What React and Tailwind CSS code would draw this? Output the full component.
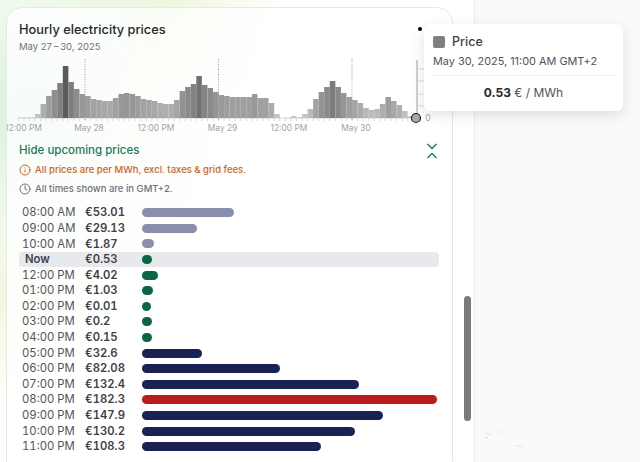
import { ChevronsDownUp, Info, Clock } from "lucide-react";

const BAR_HEIGHTS = [
  0.5, 0.5, 0.7, 4, 14, 22, 28, 35, 52, 36, 29, 24, 22, 19, 18, 17, 17, 20, 24, 25, 24, 22, 19, 18, 17,
  15, 14, 14, 18, 27, 31, 34, 42, 33, 30, 26, 23, 22, 21, 21, 21, 21, 24, 20, 20, 15, 4, 0, 0.3, 2, 1, 4, 9,
  19, 26, 31, 37, 31, 25, 21, 18, 15, 10, 8, 9, 14, 21, 17, 13, 7, 2,
];

const PRICES = [
  { time: "08:00 AM", price: 53.01, color: "bg-[#8b8fae]" },
  { time: "09:00 AM", price: 29.13, color: "bg-[#8b8fae]" },
  { time: "10:00 AM", price: 1.87, color: "bg-[#8b8fae]" },
  { time: "Now", price: 0.53, color: "bg-[#0b6545]", now: true },
  { time: "12:00 PM", price: 4.02, color: "bg-[#0b6545]" },
  { time: "01:00 PM", price: 1.03, color: "bg-[#0b6545]" },
  { time: "02:00 PM", price: 0.01, color: "bg-[#0b6545]" },
  { time: "03:00 PM", price: 0.2, color: "bg-[#0b6545]" },
  { time: "04:00 PM", price: 0.15, color: "bg-[#0b6545]" },
  { time: "05:00 PM", price: 32.6, color: "bg-[#1a2254]" },
  { time: "06:00 PM", price: 82.08, color: "bg-[#1a2254]" },
  { time: "07:00 PM", price: 132.4, color: "bg-[#1a2254]" },
  { time: "08:00 PM", price: 182.3, color: "bg-[#b91c1c]" },
  { time: "09:00 PM", price: 147.9, color: "bg-[#1a2254]" },
  { time: "10:00 PM", price: 130.2, color: "bg-[#1a2254]" },
  { time: "11:00 PM", price: 108.3, color: "bg-[#1a2254]" },
];

const X_LABELS = [
  { x: 23.5, text: "12:00 PM" },
  { x: 89, text: "May 28" },
  { x: 156, text: "12:00 PM" },
  { x: 222.5, text: "May 29" },
  { x: 289, text: "12:00 PM" },
  { x: 356, text: "May 30" },
];

function Chart() {
  const step = 133.5 / 24;
  return (
    <svg width="445" height="85" viewBox="7 50 445 85" className="block -mx-3 shrink-0">
      <line x1="18" y1="117" x2="412" y2="117" stroke="#d4d4d4" />
      {BAR_HEIGHTS.map((h, i) => {
        const gray = Math.round(205 - 2.2 * h);
        return (
          <rect
            key={i}
            x={18.3 + i * step}
            y={117 - h}
            width={step}
            height={h}
            fill={`rgb(${gray},${gray},${gray})`}
          />
        );
      })}
      {BAR_HEIGHTS.map((_, i) => (
        <line key={i} x1={18.3 + i * step} y1="117" x2={18.3 + i * step} y2="120" stroke="#d8d8d8" />
      ))}
      {[85, 218.5, 352].map((x) => (
        <line key={x} x1={x} y1="58" x2={x} y2="120" stroke="#9a9a9a" strokeDasharray="1 1.5" />
      ))}
      {X_LABELS.map((l) => (
        <text key={l.x} x={l.x} y="130" textAnchor="middle" fontSize="8.4" fill="#a3a3a3">
          {l.text}
        </text>
      ))}
      <line x1="417" y1="59" x2="417" y2="112" stroke="#cfcfcf" strokeWidth="2" />
      {[68, 80, 93, 105].map((y) => (
        <line key={y} x1="418" y1={y} x2="424" y2={y} stroke="#dcdcdc" />
      ))}
      <text x="428" y="120" textAnchor="middle" fontSize="8.4" fill="#a3a3a3">
        0
      </text>
      <circle cx="416" cy="117" r="4.5" fill="#a8a8a8" stroke="#1f1f1f" strokeWidth="1.2" />
    </svg>
  );
}

function Tooltip() {
  return (
    <div className="absolute left-[424px] top-[24px] w-[199px] h-[87px] bg-white rounded-md shadow-[0_4px_14px_rgba(0,0,0,0.12)] px-[9px] pt-[12px]">
      <div className="flex items-center gap-[7px] h-[12px]">
        <div className="w-[12px] h-[12px] rounded-[2px] bg-[#808080]"></div>
        <span className="text-[12.5px] font-medium text-[#3f3f46]">Price</span>
      </div>
      <div className="mt-[7px] text-[10.9px] leading-[13px] text-[#52525b] whitespace-nowrap">
        May 30, 2025, 11:00 AM GMT+2
      </div>
      <div className="mt-[7px] border-t border-[#eeeeee]"></div>
      <div className="mt-[10px] text-center text-[12px] leading-[14px] text-[#52525b]">
        <span className="font-bold text-[#27272a]">0.53</span> € / MWh
      </div>
    </div>
  );
}

function PriceRow({ row }) {
  return (
    <div
      className={`flex items-center w-[420px] h-[15.6px] text-[11.3px] tabular-nums rounded-[4px] ${row.now ? "bg-[#e5e7eb]/90" : ""}`}
    >
      <div className={`w-[66px] ${row.now ? "pl-[6px] font-semibold text-[#374151]" : "pl-[3px] text-[#52525b]"}`}>
        {row.time}
      </div>
      <div className="w-[57px] font-semibold text-[#3f3f46]">€{row.price}</div>
      <div className={`h-[9px] rounded-full ${row.color}`} style={{ width: 9.3 + row.price * 1.565 }}></div>
    </div>
  );
}

export default function App() {
  return (
    <div className="relative flex h-[462px] w-[640px] overflow-hidden bg-white font-['Inter',sans-serif]">
      <div className="w-[474px] shrink-0 pl-[6px] pt-[7px] bg-[radial-gradient(circle_at_30px_110px,#d8efd9_0,rgba(230,245,225,0.7)_90px,rgba(255,255,255,0)_230px),radial-gradient(circle_at_160px_10px,#f0f7dc_0,rgba(255,255,255,0)_130px),radial-gradient(circle_at_0_300px,#f6f8de_0,rgba(255,255,255,0)_110px)]">
        <div className="flex flex-col w-[447px] h-[470px] rounded-2xl border border-[#e8e8e8] bg-white/80 px-3 pt-[13px] overflow-hidden">
          <div className="flex justify-between h-[30px] shrink-0">
            <div>
              <div className="text-[12.8px] leading-[17px] font-medium text-[#27272a]">Hourly electricity prices</div>
              <div className="mt-[2px] text-[9.5px] leading-[14px] text-[#71717a]">May 27{"\u2009–\u2009"}30, 2025</div>
            </div>
            <div className="pt-[18px] -mr-[30px] text-[9.5px] leading-[14px] text-[#a3a3a3] whitespace-nowrap">€ / MWh</div>
          </div>
          <Chart />
          <div className="flex items-center justify-between h-[16px] mt-[7px] -mr-[2px]">
            <span className="text-[11.5px] font-medium text-[#1a7a5a]">Hide upcoming prices</span>
            <ChevronsDownUp size={20} strokeWidth={1.6} className="text-[#1a7a5a]" />
          </div>
          <div className="flex items-center gap-[4px] mt-[4px] h-[14px] text-[9.5px] font-medium text-[#c9642a]">
            <Info size={12} strokeWidth={2} />
            <span>All prices are per MWh, excl. taxes &amp; grid fees.</span>
          </div>
          <div className="flex items-center gap-[4px] mt-[5px] h-[14px] text-[9.5px] font-medium text-[#71717a]">
            <Clock size={12} strokeWidth={2} />
            <span>All times shown are in GMT+2.</span>
          </div>
          <div className="mt-[9px]">
            {PRICES.map((row) => (
              <PriceRow key={row.time} row={row} />
            ))}
          </div>
        </div>
      </div>
      <div className="relative flex-1 border-l border-[#ececec] bg-[#fafafa] flex items-end pb-[12px] pl-[8px]">
        <svg width="50" height="20" viewBox="0 0 50 20">
          <path d="M2 3l6 2M2 8l3-1M15 2h3M33 16h7" stroke="#dfe3e8" strokeWidth="1" fill="none" />
        </svg>
      </div>
      <div className="absolute left-[464px] top-[296px] w-[7px] h-[125px] rounded-full bg-[#7a7a7a]"></div>
      <div className="absolute left-[418px] top-[27px] w-[4px] h-[4px] rounded-full bg-black"></div>
      <Tooltip />
    </div>
  );
}
